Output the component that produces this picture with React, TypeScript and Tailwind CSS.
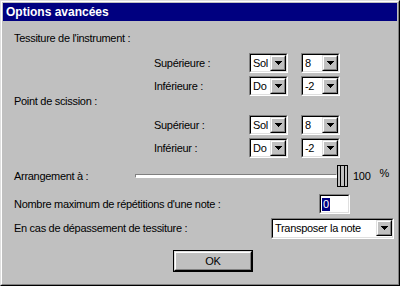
import type { ReactNode } from 'react'

function Raised({ className = '', children }: { className?: string; children?: ReactNode }) {
    return (
        <div className={`border border-t-[#dfdfdf] border-l-[#dfdfdf] border-r-black border-b-black ${className}`}>
            <div className="w-full h-full border border-t-white border-l-white border-r-[#808080] border-b-[#808080] bg-[#c0c0c0] flex items-center justify-center">
                {children}
            </div>
        </div>
    )
}

function Sunken({ className = '', children }: { className?: string; children?: ReactNode }) {
    return (
        <div className={`border border-t-[#808080] border-l-[#808080] border-r-white border-b-white ${className}`}>
            <div className="w-full h-full border border-t-black border-l-black border-r-[#dfdfdf] border-b-[#dfdfdf] bg-white flex">
                {children}
            </div>
        </div>
    )
}

function Arrow() {
    return (
        <svg width="7" height="4" viewBox="0 0 7 4" shapeRendering="crispEdges">
            <rect x="0" y="0" width="7" height="1" fill="#000" />
            <rect x="1" y="1" width="5" height="1" fill="#000" />
            <rect x="2" y="2" width="3" height="1" fill="#000" />
            <rect x="3" y="3" width="1" height="1" fill="#000" />
        </svg>
    )
}

function Combo({ value, className = '' }: { value: string; className?: string }) {
    return (
        <Sunken className={className}>
            <span className="flex-1 pl-[2px] flex items-center leading-none">{value}</span>
            <Raised className="w-[16px] h-[16px]">
                <Arrow />
            </Raised>
        </Sunken>
    )
}

function PitchRow({ label, note, octave, className = '' }: { label: string; note: string; octave: string; className?: string }) {
    return (
        <div className={`flex items-center h-[20px] ${className}`}>
            <div className="w-[140px]" />
            <span className="w-[95px]">{label}</span>
            <Combo value={note} className="w-[39px] h-[20px]" />
            <Combo value={octave} className="w-[39px] h-[20px] ml-[13px]" />
        </div>
    )
}

export default function App() {
    return (
        <div className="w-[400px] h-[286px] border border-t-[#dfdfdf] border-l-[#dfdfdf] border-r-black border-b-black font-['Liberation_Sans',Arial,sans-serif] text-[11px] tracking-[-0.3px] text-black">
            <div className="w-full h-full border border-t-white border-l-white border-r-[#808080] border-b-[#808080] bg-[#c0c0c0] p-[1px]">
                {/* Title bar */}
                <div className="h-[18px] bg-[#000080] text-white font-bold text-[12px] tracking-normal pl-[3px] flex items-center">
                    Options avancées
                </div>

                <div className="pl-[11px] flex flex-col">
                    <div className="mt-[7px] h-[20px] flex items-center">Tessiture de l'instrument :</div>
                    <PitchRow label="Supérieure :" note="Sol" octave="8" className="mt-[5px]" />
                    <PitchRow label="Inférieure :" note="Do" octave="-2" className="mt-[3px]" />

                    <div className="h-[10px] flex items-center">Point de scission :</div>
                    <PitchRow label="Supérieur :" note="Sol" octave="8" className="mt-[9px]" />
                    <PitchRow label="Inférieur :" note="Do" octave="-2" className="mt-[3px]" />

                    {/* Slider */}
                    <div className="mt-[6px] h-[24px] flex items-center">
                        <span className="w-[121px]">Arrangement à :</span>
                        <div className="w-[202px] h-[4px] border border-t-[#808080] border-l-[#808080] border-r-white border-b-white bg-white" />
                        <div className="w-[11px] h-[22px] border border-black bg-[#c0c0c0] flex justify-evenly">
                            <div className="w-px h-full bg-black" />
                            <div className="w-px h-full bg-black" />
                        </div>
                        <span className="ml-[5px]">100</span>
                        <span className="ml-[9px] -mt-[6px]">%</span>
                    </div>

                    <div className="mt-[6px] h-[20px] flex items-center">
                        <span className="w-[305px]">Nombre maximum de répétitions d'une note :</span>
                        <Sunken className="w-[31px] h-[20px]">
                            <span className="ml-[1px] my-auto h-[13px] px-[1px] bg-[#000080] text-white leading-[13px]">0</span>
                        </Sunken>
                    </div>

                    <div className="mt-[4px] h-[21px] flex items-center">
                        <span className="w-[257px]">En cas de dépassement de tessiture :</span>
                        <Combo value="Transposer la note" className="w-[123px] h-[21px]" />
                    </div>

                    <div className="mt-[11px] ml-[159px] w-[80px] h-[22px] border border-black">
                        <Raised className="w-full h-full">
                            <span>OK</span>
                        </Raised>
                    </div>
                </div>
            </div>
        </div>
    )
}
